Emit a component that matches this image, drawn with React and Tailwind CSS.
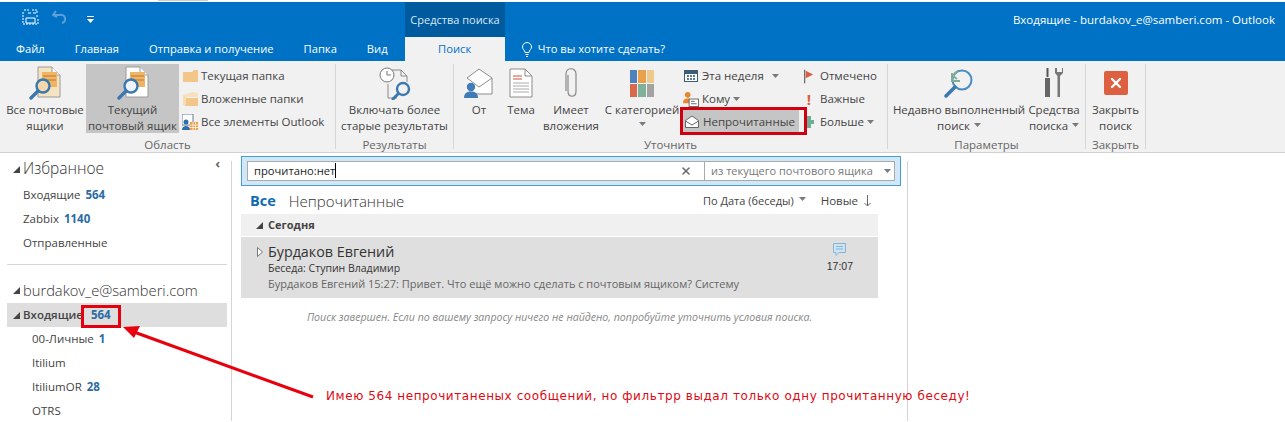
import React from 'react';
import { X } from 'lucide-react';

const Caret = ({ className = '' }) => (
  <svg width="7" height="4" viewBox="0 0 7 4" className={`inline-block ${className}`}>
    <path d="M0 0h7L3.5 4z" fill="#7a7a7a" />
  </svg>
);

const Tri = ({ className = '' }) => (
  <svg width="7" height="7" viewBox="0 0 7 7" className={`shrink-0 ${className}`}>
    <path d="M7 0v7H0z" fill="#444" />
  </svg>
);

const DocSearchIcon = ({ light }) => (
  <svg width="34" height="34" viewBox="0 0 34 34">
    <path d="M10 1h14l8 8v22H10z" fill={light ? '#fff' : '#f6e3c2'} stroke="#9a9a9a" />
    <path d="M24 1v8h8" fill="#fff" stroke="#9a9a9a" />
    <rect x="14" y="6" width="15" height="15" fill="#f0b465" />
    <path d="M15 10h13M15 14h13" stroke="#b9793a" />
    <circle cx="15" cy="20" r="6.5" fill={light ? '#eef4f9' : '#f3d8ad'} stroke="#3b78ae" strokeWidth="2.4" />
    <path d="M10 25l-7 7" stroke="#3b78ae" strokeWidth="3.4" strokeLinecap="round" />
  </svg>
);

const ClockDocIcon = () => (
  <svg width="34" height="34" viewBox="0 0 34 34">
    <path d="M14 4h9l6 6v6M10 18v14h9" fill="none" stroke="#8a8a8a" />
    <path d="M23 4v6h6" fill="none" stroke="#8a8a8a" />
    <circle cx="9" cy="9" r="7" fill="#fff" stroke="#777" />
    <path d="M9 5v4h4" fill="none" stroke="#777" />
    <circle cx="25" cy="23" r="6" fill="none" stroke="#3b78ae" strokeWidth="2.4" />
    <path d="M20 28l-5 5" stroke="#3b78ae" strokeWidth="3" strokeLinecap="round" />
  </svg>
);

const EnvelopePersonIcon = () => (
  <svg width="32" height="32" viewBox="0 0 32 32">
    <path d="M4 11L16 2l13 9v16H11" fill="#fff" stroke="#8c8c8c" />
    <path d="M4 11l12 9 13-9" fill="none" stroke="#8c8c8c" />
    <circle cx="8" cy="20" r="4.2" fill="#3f7cb8" />
    <path d="M1 31c0-5 3-6.500 7-6.500s7 1.500 7 6.500z" fill="#3f7cb8" />
  </svg>
);

const PageIcon = () => (
  <svg width="24" height="30" viewBox="0 0 24 30">
    <path d="M1 1h15l7 7v21H1z" fill="#fff" stroke="#8c8c8c" />
    <path d="M16 1v7h7" fill="none" stroke="#8c8c8c" />
    <path d="M4 8h9M4 11h9" stroke="#c9553a" />
    <path d="M4 15h16M4 18h16M4 21h16M4 24h16" stroke="#aaa" />
  </svg>
);

const ClipIcon = () => (
  <svg width="14" height="30" viewBox="0 0 14 30">
    <path d="M4 7v16c0 7 8 7 8 0V6C12-1 2-1 2 6v17" fill="none" stroke="#8a8a8a" strokeWidth="1.2" />
  </svg>
);

const CategoryIcon = () => (
  <div className="grid grid-cols-3 grid-rows-2 gap-px w-[24px] h-[27px]">
    <div className="bg-[#4f81bd]" />
    <div className="bg-[#e8a04d]" />
    <div className="bg-[#edc98a]" />
    <div className="bg-[#d8694a]" />
    <div className="bg-[#7fb09a]" />
    <div className="bg-[#a3a3a3]" />
  </div>
);

const MagnifyBackIcon = () => (
  <svg width="30" height="30" viewBox="0 0 30 30">
    <circle cx="18" cy="12" r="9.500" fill="none" stroke="#4a8cc4" strokeWidth="2" />
    <path d="M11 19L2 28" stroke="#3b78ae" strokeWidth="3.500" strokeLinecap="round" />
    <path d="M14 3a9 9 0 0 0-5 5l4 3" fill="none" stroke="#7fae97" strokeWidth="2" />
    <path d="M8 5v8h8" fill="none" stroke="#7fae97" strokeWidth="2" />
  </svg>
);

const ToolsIcon = () => (
  <svg width="20" height="30" viewBox="0 0 20 30">
    <path d="M2.500 0h2v9h-2z" fill="#555" />
    <path d="M1 10h5v19H1z" fill="#666" />
    <path d="M11 0v5l2.500 3v21h2.500V8L19 5V0l-1 0v4h-5V0z" fill="#777" />
  </svg>
);

const CalendarIcon = () => (
  <svg width="14" height="12" viewBox="0 0 14 12">
    <rect width="14" height="12" fill="#3d5d76" />
    <path d="M1 4h12v7H1z" fill="#fff" />
    <path d="M3 5h2v2H3zM6 5h2v2H6zM9 5h2v2H9zM3 8h2v2H3zM6 8h2v2H6zM9 8h2v2H9z" fill="#5b7a91" />
  </svg>
);

const ToIcon = () => (
  <svg width="16" height="15" viewBox="0 0 17 16">
    <circle cx="5" cy="3" r="3" fill="#e8862e" />
    <path d="M0 12c0-4 2-5 5-5 2 0 3 .5 3 2v3z" fill="#e8862e" />
    <rect x="6.500" y="7.500" width="10" height="8" fill="#fff" stroke="#666" />
    <path d="M8.500 10h4M8.500 12.500h6" stroke="#666" />
  </svg>
);

const OpenEnvelopeIcon = () => (
  <svg width="14" height="14" viewBox="0 0 14 14">
    <path d="M.5 5.500L7 1l6.500 4.500v7H.5z" fill="#fff" stroke="#666" />
    <path d="M.5 6L7 10l6.500-4" fill="none" stroke="#666" />
  </svg>
);

const FlagIcon = () => (
  <svg width="10" height="15" viewBox="0 0 12 16">
    <path d="M0 0h1.500v16H0z" fill="#6b6b6b" />
    <path d="M2 1l9 4.500L2 10z" fill="#d8603f" />
  </svg>
);

const PlusIcon = () => (
  <svg width="10" height="12" viewBox="0 0 10 12">
    <path d="M3 0h4v4h3v4H7v4H3V8H0V4h3z" fill="#6fae96" />
  </svg>
);

const FolderIcon = () => (
  <svg width="15" height="14" viewBox="0 0 15 14">
    <path d="M0 3h9l2-2h4v12H0z" fill="#f2c688" />
  </svg>
);

const NestedFolderIcon = () => (
  <svg width="15" height="14" viewBox="0 0 15 14">
    <path d="M0 3l10-3 5 1v4H0z" fill="#f7e0bb" />
    <path d="M2 6h13v8H2z" fill="#f2c688" />
    <path d="M0 4h3v9H0z" fill="#f7dcb0" />
  </svg>
);

const AllItemsIcon = () => (
  <svg width="16" height="16" viewBox="0 0 16 16">
    <rect x="0" y="0" width="11" height="11" fill="#fff" stroke="#6a7f90" />
    <circle cx="4" cy="8" r="2.500" fill="#2f6ea5" />
    <path d="M0 16c0-3 2-4 4-4s4 1 4 4z" fill="#2f6ea5" />
    <rect x="8" y="8" width="8" height="8" fill="#e8a04d" />
    <path d="M8 11h8M8 13.500h8M11 8v8M13.500 8v8" stroke="#fff" strokeWidth=".7" />
  </svg>
);

const BigButton = ({ width, icon, lines, caret, active }) => (
  <div className={`flex flex-col items-center shrink-0 h-[69px] ${width} ${active ? 'bg-[#c5c5c5]' : ''}`}>
    <div className="h-[38px] shrink-0 flex items-center justify-center">{icon}</div>
    {lines.map((line, i) => (
      <div key={i} className="h-4 leading-4 whitespace-nowrap">{line}{caret === true && i === lines.length - 1 && <Caret className="ml-1 mb-[3px]" />}</div>
    ))}
    {caret === 'below' && <Caret className="mt-1" />}
  </div>
);

const SmallButton = ({ icon, children, active, width = '' }) => (
  <div className={`flex items-center h-[23px] pt-px whitespace-nowrap ${width} ${active ? 'bg-[#c5c5c5]' : ''}`}>
    <span className="w-[20px] shrink-0 flex justify-center">{icon}</span>
    <span className="ml-[1px]">{children}</span>
  </div>
);

const Group = ({ width, label, children }) => (
  <div className={`shrink-0 flex flex-col h-full pt-[3px] ${width}`}>
    <div className="h-[72px] flex border-r border-[#d6d6d6]">{children}</div>
    <div className="h-[13px] border-r border-[#d6d6d6] text-center leading-[18px] text-[#666]">{label}</div>
  </div>
);

const Count = ({ children }) => <span className="font-bold text-[#2b6ca3] ml-[5px]">{children}</span>;

const NavRow = ({ children, indent = 'pl-[16px]', selected }) => (
  <div className={`h-6 flex items-center ml-[7px] w-[220px] whitespace-nowrap ${indent} ${selected ? 'bg-[#dedede]' : ''}`}>{children}</div>
);

export default function App() {
  return (
    <div className="relative w-[1285px] h-[422px] overflow-hidden bg-white text-[#444] text-[11.5px] font-['Open_Sans',sans-serif]">
      <div className="h-[2px]">
        <div className="ml-[158px] w-[50px] h-px bg-[#d0d0d0]" />
      </div>
      {/* title bar */}
      <div className="h-[35px] bg-[#0072c6] flex text-white">
        <div className="w-[405px] flex items-start pt-[7px] pl-[22px]">
          <svg width="17" height="17" viewBox="0 0 17 17">
            <path d="M2 1h6M10 1h5v3M15 6v2M1 3v12h15V10" fill="none" stroke="#fff" strokeDasharray="2 1" />
            <path d="M4 9h9v5H4zM6 4h3M11 4h3" fill="none" stroke="#fff" />
          </svg>
          <svg width="14" height="14" viewBox="0 0 14 14" className="ml-[13px] mt-[1px]">
            <path d="M4 1L1 5l4 2M1 5h7a4 4 0 0 1 2 8" fill="none" stroke="#5d9fd8" strokeWidth="2" />
          </svg>
          <svg width="7" height="7" viewBox="0 0 7 7" className="ml-[21px] mt-[7px]">
            <path d="M0 0h7v1H0zM0 3h7L3.500 7z" fill="#fff" />
          </svg>
        </div>
        <div className="w-[100px] bg-[#005a9e] text-[#d8e8f5] text-center text-[11px] leading-[35px] whitespace-nowrap">Средства поиска</div>
        <div className="flex-1 text-right pr-[10px] leading-[35px]">Входящие - burdakov_e@samberi.com - Outlook</div>
      </div>
      {/* tabs */}
      <div className="h-[24px] bg-[#0072c6] flex items-center text-white text-[11.2px] pl-[16px] gap-[30px] leading-[24px]">
        <span>Файл</span>
        <span>Главная</span>
        <span>Отправка и получение</span>
        <span>Папка</span>
        <span>Вид</span>
        <span className="w-[100px] -ml-[13px] h-full bg-[#f1f1f1] text-[#0072c6] text-center">Поиск</span>
        <span className="-ml-[13px] flex items-center gap-[6px]">
          <svg width="10" height="15" viewBox="0 0 10 15">
            <path d="M3 10.500C3 8 .5 7.500.5 5a4.500 4.500 0 0 1 9 0C9.500 7.500 7 8 7 10.500zM3.500 12.500h3M4 14.500h2" fill="none" stroke="#fff" />
          </svg>
          Что вы хотите сделать?
        </span>
      </div>
      {/* ribbon */}
      <div className="h-[92px] bg-[#f1f1f1] border-b border-[#d2d2d2] flex">
        <Group width="w-[336px]" label="Область">
          <div className="w-[86px] flex shrink-0">
            <BigButton width="w-[82px] ml-[4px]" icon={<DocSearchIcon />} lines={['Все почтовые', 'ящики']} />
          </div>
          <BigButton width="w-[93px]" active icon={<DocSearchIcon light />} lines={['Текущий', 'почтовый ящик']} />
          <div className="pl-[1px] flex flex-col">
            <SmallButton icon={<FolderIcon />}>Текущая папка</SmallButton>
            <SmallButton icon={<NestedFolderIcon />}>Вложенные папки</SmallButton>
            <SmallButton icon={<AllItemsIcon />}>Все элементы Outlook</SmallButton>
          </div>
        </Group>
        <Group width="w-[118px]" label="Результаты">
          <BigButton width="w-full" icon={<ClockDocIcon />} lines={['Включать более', 'старые результаты']} />
        </Group>
        <Group width="w-[434px]" label="Уточнить">
          <BigButton width="w-[50px]" icon={<EnvelopePersonIcon />} lines={['От']} />
          <BigButton width="w-[34px]" icon={<PageIcon />} lines={['Тема']} />
          <BigButton width="w-[66px]" icon={<ClipIcon />} lines={['Имеет', 'вложения']} />
          <BigButton width="w-[76px]" icon={<CategoryIcon />} lines={['С категорией']} caret="below" />
          <div className="w-[119px] shrink-0 pl-[1px] flex flex-col">
            <SmallButton icon={<CalendarIcon />}>Эта неделя <Caret className="ml-[5px] mb-[2px]" /></SmallButton>
            <SmallButton icon={<ToIcon />}>Кому <Caret className="mb-[2px]" /></SmallButton>
            <SmallButton active width="w-[118px] pl-[1px]" icon={<OpenEnvelopeIcon />}>Непрочитанные</SmallButton>
          </div>
          <div className="flex flex-col">
            <SmallButton icon={<FlagIcon />}>Отмечено</SmallButton>
            <SmallButton icon={<span className="text-[#d8603f] font-bold text-[15px] leading-none">!</span>}>Важные</SmallButton>
            <SmallButton icon={<PlusIcon />}>Больше <Caret className="mb-[2px]" /></SmallButton>
          </div>
        </Group>
        <Group width="w-[198px]" label="Параметры">
          <BigButton width="w-[142px]" icon={<MagnifyBackIcon />} lines={['Недавно выполненный', 'поиск']} caret />
          <BigButton width="w-[48px]" icon={<ToolsIcon />} lines={['Средства', 'поиска']} caret />
        </Group>
        <Group width="w-[60px]" label="Закрыть">
          <BigButton width="w-full" icon={
            <div className="w-[24px] h-[24px] rounded-[2px] bg-[#dd6140] flex items-center justify-center">
              <X size={16} color="#fff" strokeWidth={3.5} />
            </div>
          } lines={['Закрыть', 'поиск']} />
        </Group>
      </div>
      {/* main */}
      <div className="flex h-[268px]">
        {/* folders */}
        <div className="w-[232px] shrink-0 flex">
          <div className="w-[231px] pt-[3px]">
            <div className="h-[26px] flex items-center ml-[13px] pr-[11px] text-[15.5px] font-light text-[#333]">
              <Tri />
              <span className="ml-[3px] flex-1">Избранное</span>
              <span className="text-[13px] font-bold text-[#666] -mt-[10px]">‹</span>
            </div>
            <div className="mt-px">
              <NavRow>Входящие<Count>564</Count></NavRow>
              <NavRow>Zabbix<Count>1140</Count></NavRow>
              <NavRow>Отправленные</NavRow>
            </div>
            <div className="h-px w-[220px] ml-[7px] mt-[9px] bg-[#d6d6d6]" />
            <div className="h-[26px] mt-[12px] flex items-center ml-[13px] text-[14.7px] font-light text-[#333] whitespace-nowrap">
              <Tri />
              <span className="ml-[3px]">burdakov_e@samberi.com</span>
            </div>
            <NavRow selected indent="pl-[6px]">
              <Tri />
              <span className="ml-[3px] font-semibold mr-[3px]">Входящие</span>
              <Count>564</Count>
            </NavRow>
            <NavRow indent="pl-[25px]">00-Личные<Count>1</Count></NavRow>
            <NavRow indent="pl-[25px]">Itilium</NavRow>
            <NavRow indent="pl-[25px]">ItiliumOR<Count>28</Count></NavRow>
            <NavRow indent="pl-[25px]">OTRS</NavRow>
          </div>
          <div className="w-px mt-[8px] bg-[#d4d4d4]" />
        </div>
        {/* message list */}
        <div className="w-[675px] shrink-0 pl-[9px] pt-[3px]">
          <div className="w-[660px] h-[30px] bg-[#cfe7f8] border border-[#4a9dd3] px-[5px] py-[4px]">
            <div className="h-[20px] bg-white border border-[#aaa] flex items-center">
              <div className="flex-1 pl-[6px] flex items-center text-[11.2px] text-[#222]">
                прочитано:нет<span className="w-px h-[15px] bg-black" />
              </div>
              <X size={12} strokeWidth={3} color="#666" className="mr-[12px]" />
              <div className="w-[190px] h-full border-l border-[#aaa] flex items-center justify-between pl-[6px] pr-[3px] text-[11px] text-[#777] whitespace-nowrap">
                из текущего почтового ящика
                <Caret />
              </div>
            </div>
          </div>
          <div className="w-[637px] h-[28px] pt-[2px] flex items-center whitespace-nowrap">
            <span className="ml-[9px] text-[14.5px] font-bold text-[#0f6cb0]">Все</span>
            <span className="ml-[13px] text-[15px] font-light text-[#333]">Непрочитанные</span>
            <span className="ml-auto text-[11px]">По Дата (беседы)</span>
            <Caret className="ml-[5px] mb-[4px]" />
            <span className="ml-[15px]">Новые</span>
            <svg width="7" height="12" viewBox="0 0 7 12" className="ml-[6px] mr-[7px]">
              <path d="M3.500 0v11M.5 8l3 3 3-3" fill="none" stroke="#666" />
            </svg>
          </div>
          <div className="w-[637px] h-[22px] bg-[#f0f0f0] flex items-center pl-[15px] text-[11px] font-bold">
            <Tri />
            <span className="ml-[5px]">Сегодня</span>
          </div>
          <div className="w-[637px] h-[61px] mt-px bg-[#dfdfdf] flex pl-[16px] pr-[25px] pt-[6px]">
            <svg width="6" height="10" viewBox="0 0 6 10" className="mt-[4px] shrink-0">
              <path d="M.5.5l5 4.500-5 4.500z" fill="#fff" stroke="#777" />
            </svg>
            <div className="ml-[5px] flex-1 whitespace-nowrap">
              <div className="text-[14.3px] leading-[18px] text-[#333]">Бурдаков Евгений</div>
              <div className="text-[10.5px] leading-[15px] font-medium text-[#333]">Беседа: Ступин Владимир</div>
              <div className="text-[11px] leading-[15px] text-[#666]">Бурдаков Евгений 15:27:  Привет. Что ещё можно сделать с почтовым ящиком? Систему</div>
            </div>
            <div className="flex flex-col items-center">
              <svg width="13" height="13" viewBox="0 0 13 13">
                <path d="M.5.5h12v9H6l-3 3v-3H.5z" fill="#cfe3f3" stroke="#86b4d8" />
                <path d="M3 3.500h7M3 6h7" stroke="#86b4d8" />
              </svg>
              <span className="text-[#333] mt-[3px] text-[10.5px] font-['Liberation_Sans',sans-serif]">17:07</span>
            </div>
          </div>
          <div className="w-[637px] mt-[12px] text-center text-[10.6px] italic text-[#888] whitespace-nowrap">Поиск завершен. Если по вашему запросу ничего не найдено, попробуйте уточнить условия поиска.</div>
        </div>
        <div className="w-px mt-[8px] bg-[#d4d4d4]" />
      </div>
      {/* annotations on top of the screenshot */}
      <div className="absolute left-[680px] top-[107px] w-[127px] h-[28px] border-[3px] border-[#d0000f]" />
      <div className="absolute left-[81px] top-[305px] w-[40px] h-[23px] border-[3px] border-[#e4000f]" />
      <svg width="1285" height="422" className="absolute left-0 top-0 pointer-events-none">
        <path d="M313 397L134 332" stroke="#e8000f" strokeWidth="3" />
        <path d="M123 327l17-1-6 12z" fill="#e8000f" />
      </svg>
      <div className="absolute left-[326px] top-[387px] text-[12px] tracking-[0.58px] text-[#dc0a14] whitespace-nowrap font-['DejaVu_Sans',sans-serif]">Имею 564 непрочитаненых сообщений, но фильтрр выдал только одну прочитанную беседу!</div>
    </div>
  );
}
